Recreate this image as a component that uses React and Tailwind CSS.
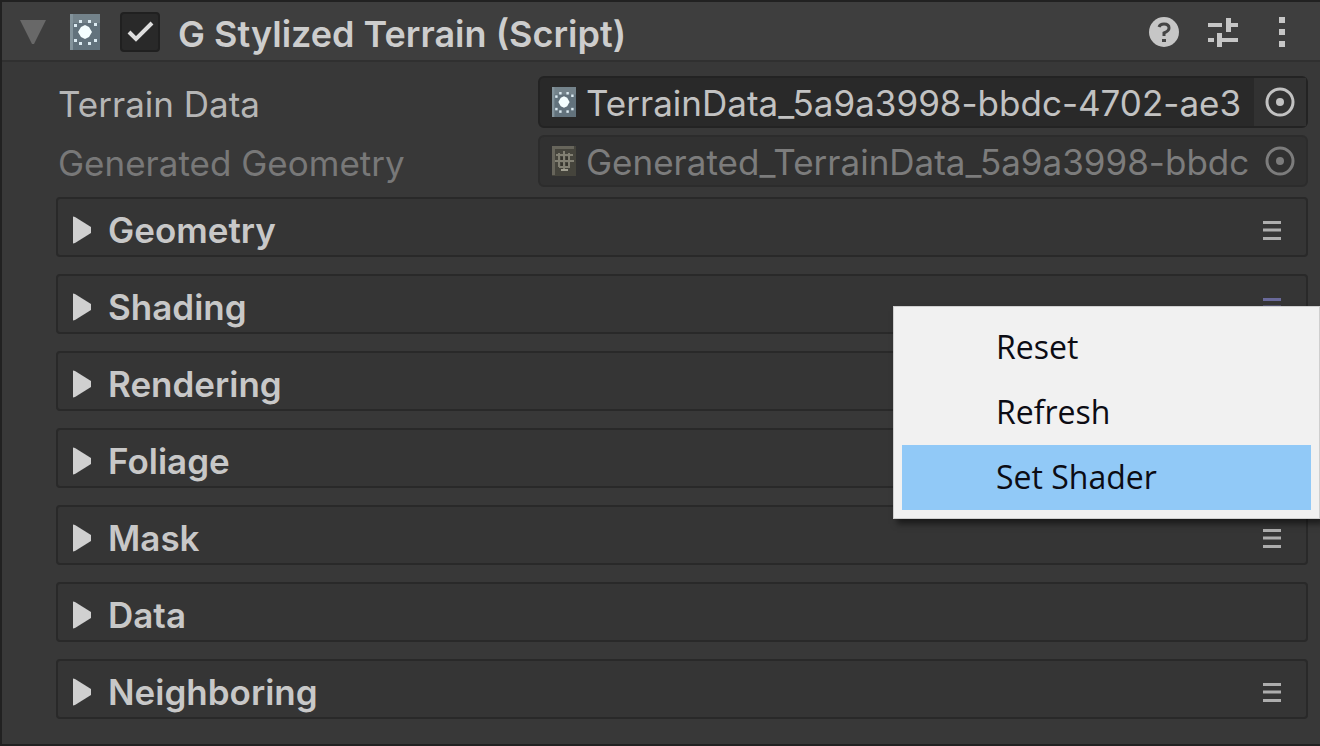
import { useState } from "react";

const SECTIONS = [
  { name: "Geometry", menu: true },
  { name: "Shading", menu: true, open: true },
  { name: "Rendering", menu: true },
  { name: "Foliage", menu: true },
  { name: "Mask", menu: true },
  { name: "Data", menu: false },
  { name: "Neighboring", menu: true },
];

function TerrainIcon({ className }) {
  return (
    <svg viewBox="0 0 30 36" preserveAspectRatio="none" className={className} aria-hidden="true">
      <rect width="30" height="36" fill="#62727c" />
      <rect width="30" height="9" fill="#74838b" />
      <path d="M0 0h3v36H0z" fill="#83939b" />
      <path d="M15 11l4 2 3 5-3 5-4 2-4-2-3-5 3-5z" fill="#f4feff" />
      <g fill="#dcebf2">
        <rect x="9" y="6" width="3" height="3" />
        <rect x="18" y="6" width="3" height="3" />
        <rect x="4" y="10" width="3" height="3" />
        <rect x="24" y="9" width="3" height="3" />
        <rect x="4" y="25" width="3" height="3" />
        <rect x="24" y="25" width="3" height="3" />
        <rect x="9" y="28" width="3" height="3" />
        <rect x="18" y="28" width="3" height="3" />
      </g>
    </svg>
  );
}

function MeshIcon({ className }) {
  return (
    <svg viewBox="0 0 24 30" className={className} aria-hidden="true">
      <rect width="24" height="30" fill="#45443c" />
      <path d="M0 0h22v3H3v26H0z" fill="#67655b" />
      <path d="M4 9h17M3 15h19M7 21h11M7 7v14M12 5v19M17 7v14" stroke="#817f72" strokeWidth="2" fill="none" />
      <path d="M9 11h2v3H9zM14 11h2v3h-2zM9 17h2v3H9zM14 17h2v3h-2z" fill="#35342d" />
      <path d="M9 23h7v2H9z" fill="#a09e90" />
    </svg>
  );
}

function ObjectField({ id, label, value, icon, disabled }) {
  return (
    <div className={`flex h-13 items-center ${disabled ? "text-[#7c7c7c]" : "text-[#c2c2c2]"}`}>
      <label htmlFor={id} className={`w-[37%] shrink-0 pt-1 pl-[2px] ${disabled ? "text-[#787878]" : "text-[#b6b6b6]"}`}>
        {label}
      </label>
      <div
        className={`ml-auto flex h-13 w-[770px] items-center rounded-md border-2 pl-3 ${
          disabled ? "border-[#2c2c2c] bg-[#313131]" : "border-[#232323] bg-[#292929]"
        }`}
      >
        {icon}
        <input
          id={id}
          readOnly
          disabled={disabled}
          defaultValue={value}
          className="ml-[10px] h-11 min-w-0 flex-1 bg-transparent pt-[2px] outline-none"
        />
        <button
          type="button"
          disabled={disabled}
          aria-label={`Select ${label}`}
          className={`flex h-full w-13 items-center justify-center ${disabled ? "" : "bg-[#323232]"}`}
        >
          <svg viewBox="0 0 30 30" className="size-[30px]" fill="none" aria-hidden="true">
            <circle cx="15" cy="15" r="13" stroke="currentColor" strokeWidth="3" />
            <circle cx="15" cy="15" r="4" fill="currentColor" />
          </svg>
        </button>
      </div>
    </div>
  );
}

function ContextMenu() {
  return (
    <div
      role="menu"
      className="absolute top-[30px] -right-[14px] z-10 flex w-[427px] flex-col border border-[#cfcfcf] bg-[#f1f1f1] p-2 font-['Open_Sans',sans-serif] text-[32px] text-[#0c0c14] shadow-[4px_5px_6px_rgba(0,0,0,0.5)]"
    >
      {["Reset", "Refresh", "Set Shader"].map((item) => (
        <button
          key={item}
          type="button"
          role="menuitem"
          className={`h-[65px] pb-[2px] pl-[94px] text-left ${item === "Set Shader" ? "bg-[#91c9f7]" : "hover:bg-[#91c9f7]"}`}
        >
          {item}
        </button>
      ))}
    </div>
  );
}

function Section({ name, menu, open }) {
  return (
    <section className="relative flex h-15 items-center rounded-sm border-2 border-[#292929] bg-[#353535]">
      <button type="button" className="flex h-full flex-1 items-center gap-4 pt-[6px] pl-[14px] text-left">
        <svg viewBox="0 0 20 28" className="h-7 w-5" fill="#d0d0d0" aria-hidden="true">
          <path d="M1 0.500L3 1L19 11V17L3 27L1 27.500z" />
        </svg>
        <h2 className="font-semibold">{name}</h2>
      </button>
      {menu && (
        <button type="button" aria-label={`${name} options`} className="flex h-full w-17 items-center justify-center pt-[6px]">
          <svg viewBox="0 0 20 22" className="h-[22px] w-5" aria-hidden="true">
            <path
              d="M1 3.500H19M1 11H19M1 19.500H19"
              stroke={open ? "#69699a" : "#adadad"}
              strokeWidth="3"
              fill="none"
            />
          </svg>
        </button>
      )}
      {open && <ContextMenu />}
    </section>
  );
}

export default function App() {
  const [enabled, setEnabled] = useState(true);
  return (
    <main className="min-h-screen border-y-2 border-l-2 border-[#212121] bg-[#383838] font-['Inter',sans-serif] text-[35px] leading-10 text-[#c8c8c8]">
      <header className="flex h-15 items-center border-b-2 border-[#303030] bg-[#3e3e3e] pt-[2px] pr-[22px] pl-[18px]">
        <button type="button" aria-label="Collapse component">
          <svg viewBox="0 0 26 24" className="h-6 w-[26px]" fill="#686868" aria-hidden="true">
            <path d="M0 0H26L14 24H12z" />
          </svg>
        </button>
        <TerrainIcon className="ml-6 h-9 w-[30px]" />
        <label className="relative ml-5 flex size-10">
          <input
            type="checkbox"
            aria-label="Enable component"
            checked={enabled}
            onChange={(e) => setEnabled(e.target.checked)}
            className="size-10 appearance-none rounded-sm border-2 border-[#202020] bg-[#292929]"
          />
          {enabled && (
            <svg viewBox="0 0 40 40" className="pointer-events-none absolute inset-0" fill="none" aria-hidden="true">
              <path d="M9 20L16 27L32 11" stroke="#dedede" strokeWidth="4" />
            </svg>
          )}
        </label>
        <h1 className="ml-[18px] pt-1 text-[36px] font-semibold text-[#cdcdcd]">G Stylized Terrain (Script)</h1>
        <div className="ml-auto flex items-center gap-7 text-[#c6c6c6]">
          <button type="button" aria-label="Help">
            <svg viewBox="0 0 32 32" className="size-8" aria-hidden="true">
              <circle cx="16" cy="16" r="15" fill="currentColor" />
              <path d="M11 11Q12 8 16 8Q21 8 21 12Q21 15 16 17V20" stroke="#444444" strokeWidth="3" fill="none" />
              <path d="M14 23h4v3h-4z" fill="#444444" />
            </svg>
          </button>
          <button type="button" aria-label="Presets">
            <svg viewBox="0 0 30 30" className="size-[30px]" fill="currentColor" aria-hidden="true">
              <path d="M0 6h14v4H0zM18 1h5v14h-5zM23 6h7v4h-7zM0 21h6v4H0zM9 16h5v14H9zM14 21h16v4H14z" />
            </svg>
          </button>
          <button type="button" aria-label="More options" className="flex w-8 justify-center">
            <svg viewBox="0 0 6 30" className="h-[30px] w-[6px]" fill="currentColor" aria-hidden="true">
              <path d="M0 0h6v6H0zM0 12h6v6H0zM0 24h6v6H0z" />
            </svg>
          </button>
        </div>
      </header>
      <div className="pt-[14px] pr-3 pb-6 pl-[54px]">
        <div className="flex flex-col gap-[7px]">
          <ObjectField
            id="terrain-data"
            label="Terrain Data"
            value="TerrainData_5a9a3998-bbdc-4702-ae3"
            icon={<TerrainIcon className="h-[30px] w-6" />}
          />
          <ObjectField
            id="generated-geometry"
            label="Generated Geometry"
            value="Generated_TerrainData_5a9a3998-bbdc"
            disabled
            icon={<MeshIcon className="h-[30px] w-6" />}
          />
        </div>
        <div className="mt-[10px] flex flex-col gap-[17px]">
          {SECTIONS.map((s) => (
            <Section key={s.name} {...s} />
          ))}
        </div>
      </div>
    </main>
  );
}
